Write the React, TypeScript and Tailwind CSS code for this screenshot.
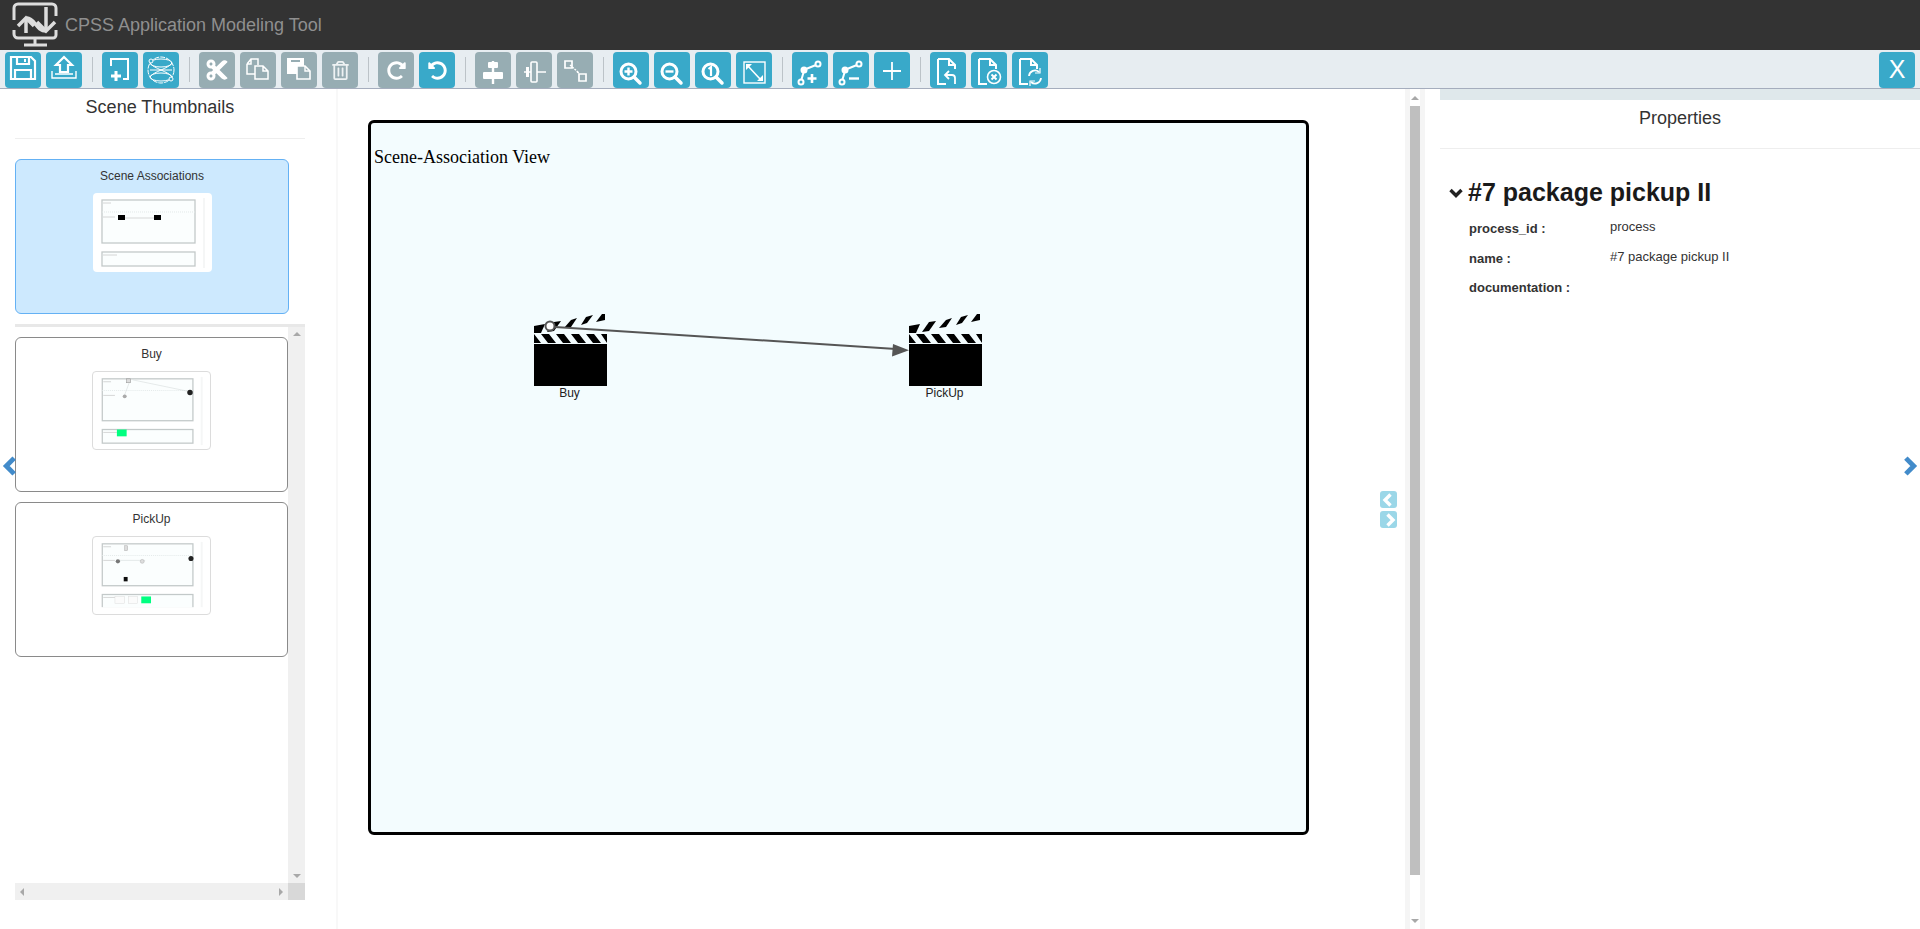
import type {ReactNode} from 'react';
import {FaCut, FaRedoAlt, FaRegTrashAlt, FaUndoAlt} from 'react-icons/fa';

const sansFont = 'font-["Liberation_Sans",Arial,sans-serif]';

function Ico({children}: {children: ReactNode}) {
  return (
    <svg viewBox="0 0 36 36" className="h-9 w-9" fill="none" stroke="white" strokeWidth="2">
      {children}
    </svg>
  );
}

function ToolButton({children, off}: {children: ReactNode; off?: boolean}) {
  return (
    <button
      className={`flex h-9 w-9 shrink-0 items-center justify-center rounded-[4px] text-white ${
        off ? 'bg-[#97adb3]' : 'bg-[#39a9c9]'
      }`}
    >
      {children}
    </button>
  );
}

function Sep() {
  return <div className="mx-[9.5px] mt-[5px] h-[25px] w-px shrink-0 bg-[#bcc3c8]" />;
}

function Magnifier({children}: {children?: ReactNode}) {
  return (
    <Ico>
      <circle cx="15.5" cy="19.5" r="7.5" strokeWidth="3" />
      <path d="M21 25l6 6" strokeWidth="3.5" strokeLinecap="round" />
      {children}
    </Ico>
  );
}

function PathIcon({children}: {children: ReactNode}) {
  return (
    <Ico>
      <circle cx="9" cy="30" r="2.5" />
      <circle cx="12" cy="18" r="2.5" fill="white" />
      <circle cx="26" cy="12" r="2.5" />
      <path d="M9.5 27.5l2-7M14 17l10-4" />
      {children}
    </Ico>
  );
}

function DocIcon({children}: {children: ReactNode}) {
  return (
    <Ico>
      <path d="M8 7h11l6 6v4M19 7v6h6M8 7v25h8" />
      {children}
    </Ico>
  );
}

function Toolbar() {
  return (
    <div className="flex h-[39px] shrink-0 items-start border-b border-[#a5adbd] bg-[#e7edf1] pl-[5px] pt-[2px] pr-[5px]">
      <div className="flex gap-[5px]">
        <ToolButton>
          <Ico>
            <path d="M6 5h20l4 4v18H6z" strokeWidth="2.2" />
            <path d="M12 5v7h12V5M10 27v-9h16v9" strokeWidth="2.2" />
            <path d="M20 7v3" />
          </Ico>
        </ToolButton>
        <ToolButton>
          <Ico>
            <path d="M6 19v7h24v-7M9 22h18" strokeWidth="1.4" />
            <path d="M18 5l-8 8h4v7h8v-7h4z" strokeWidth="2.2" />
          </Ico>
        </ToolButton>
      </div>
      <Sep />
      <div className="flex gap-[5px]">
        <ToolButton>
          <Ico>
            <path d="M9 14V7h17v20h-5" />
            <path d="M14 19v10M9 24h10" strokeWidth="3" />
          </Ico>
        </ToolButton>
        <ToolButton>
          <Ico>
            <g strokeWidth="1">
              <circle cx="18" cy="18" r="13" strokeDasharray="5 1" />
              <ellipse cx="18" cy="11" rx="11" ry="4" />
              <ellipse cx="18" cy="25" rx="11" ry="4" />
              <path d="M7 11c4 6 18 8 22 14M29 11c-4 6-18 8-22 14M7 18h22" />
              <circle cx="8" cy="9" r="2" fill="#39a9c9" />
              <circle cx="28" cy="27" r="2" fill="#39a9c9" />
            </g>
          </Ico>
        </ToolButton>
      </div>
      <Sep />
      <div className="flex gap-[5px]">
        <ToolButton off>
          <FaCut size={24} />
        </ToolButton>
        <ToolButton off>
          <Ico>
            <path d="M7 12l4-5h7v6M7 12v10h8M7 12h4V7" strokeWidth="1.5" />
            <path d="M15 14h8l5 5v8H15zM23 14v5h5" strokeWidth="1.5" />
          </Ico>
        </ToolButton>
        <ToolButton off>
          <Ico>
            <rect x="6" y="6" width="17" height="16" fill="white" stroke="none" />
            <path d="M10 9h9" stroke="#97adb3" strokeWidth="2" />
            <path d="M16 14h8l5 5v8H16z" fill="#97adb3" strokeWidth="1.6" />
            <path d="M24 14v5h5" strokeWidth="1.4" />
          </Ico>
        </ToolButton>
        <ToolButton off>
          <FaRegTrashAlt size={19} className="text-[#eef2f3]" />
        </ToolButton>
      </div>
      <Sep />
      <div className="flex gap-[5px]">
        <ToolButton off>
          <FaRedoAlt size={19} />
        </ToolButton>
        <ToolButton>
          <FaUndoAlt size={19} />
        </ToolButton>
      </div>
      <Sep />
      <div className="flex gap-[5px]">
        <ToolButton off>
          <Ico>
            <path d="M18 9v23" strokeWidth="2.4" />
            <rect x="13" y="10" width="10" height="6" rx="1" fill="white" stroke="none" />
            <rect x="8" y="20" width="20" height="7" rx="1" fill="white" stroke="none" />
          </Ico>
        </ToolButton>
        <ToolButton off>
          <Ico>
            <path d="M8 20h22" strokeWidth="1.5" />
            <rect x="15" y="10" width="6" height="20" rx="1" fill="#97adb3" strokeWidth="1.6" />
            <rect x="10" y="15" width="3" height="10" fill="white" stroke="none" />
          </Ico>
        </ToolButton>
        <ToolButton off>
          <Ico>
            <path d="M8 9h7v7H8zM22 22h7v7h-7z" strokeWidth="1.7" />
            <path d="M13 13l9 8M20 20l2 1" strokeWidth="1.4" strokeDasharray="2 1" />
          </Ico>
        </ToolButton>
      </div>
      <Sep />
      <div className="flex gap-[5px]">
        <ToolButton>
          <Magnifier>
            <path d="M11.5 19.5h8M15.5 15.5v8" strokeWidth="2.4" />
          </Magnifier>
        </ToolButton>
        <ToolButton>
          <Magnifier>
            <path d="M11.5 19.5h8" strokeWidth="2.4" />
          </Magnifier>
        </ToolButton>
        <ToolButton>
          <Magnifier>
            <path d="M13.5 17l2.5-2v9" strokeWidth="2.2" />
          </Magnifier>
        </ToolButton>
        <ToolButton>
          <Ico>
            <rect x="8" y="10" width="21" height="21" strokeWidth="1.4" />
            <path d="M11 13l14 15" strokeWidth="1.6" />
            <path d="M10 12h6l-6 6zM27 29h-6l6-6z" fill="white" stroke="none" />
          </Ico>
        </ToolButton>
      </div>
      <Sep />
      <div className="flex gap-[5px]">
        <ToolButton>
          <PathIcon>
            <path d="M20 22v9M15.5 26.5h9" strokeWidth="2.6" />
          </PathIcon>
        </ToolButton>
        <ToolButton>
          <PathIcon>
            <path d="M16 26.5h10" strokeWidth="2.4" />
          </PathIcon>
        </ToolButton>
        <ToolButton>
          <Ico>
            <path d="M18 10v18M9 19h18" strokeWidth="1.8" />
          </Ico>
        </ToolButton>
      </div>
      <Sep />
      <div className="flex gap-[5px]">
        <ToolButton>
          <DocIcon>
            <path d="M25 32v-6a3 3 0 0 0-3-3h-6M19 19l-4 4 4 4" strokeWidth="1.8" />
          </DocIcon>
        </ToolButton>
        <ToolButton>
          <DocIcon>
            <circle cx="23" cy="25" r="6.5" strokeWidth="1.6" />
            <path d="M20.5 22.5l5 5M25.5 22.5l-5 5" />
          </DocIcon>
        </ToolButton>
        <ToolButton>
          <DocIcon>
            <path d="M17 24a6 6 0 0 1 10-4M29 26a6 6 0 0 1-10 4" strokeWidth="1.8" />
            <path d="M28 16v5h-5M18 34v-5h5" strokeWidth="1.2" />
          </DocIcon>
        </ToolButton>
      </div>
      <button
        className={`ml-auto flex h-9 w-9 items-center justify-center rounded-[4px] bg-[#39a9c9] text-[25px] text-white ${sansFont}`}
      >
        X
      </button>
    </div>
  );
}

function ThumbFrames() {
  return (
    <g fill="#fbfefe" stroke="#c3c9c9" strokeWidth="1.3">
      <rect x="9" y="7" width="93" height="43" />
      <path d="M9 19h93" stroke="#e3e9e9" strokeWidth="1" strokeDasharray="1 1" />
      <rect x="9" y="59" width="93" height="14" />
      <path d="M111 5v70" stroke="#f5f6f6" strokeWidth="2" />
      <path d="M10 10h8M10 24h12M10 62h14" stroke="#cccccc" strokeWidth="0.8" />
    </g>
  );
}

function SceneThumb({kind}: {kind: 'assoc' | 'buy' | 'pickup'}) {
  return (
    <svg
      viewBox="0 0 119 79"
      className={`mx-auto h-[79px] w-[119px] rounded-[4px] bg-white ${
        kind === 'assoc' ? '' : 'border border-[#dcdcdc]'
      }`}
    >
      <filter id={`soft-${kind}`} x="-5%" y="-5%" width="110%" height="110%">
        <feGaussianBlur stdDeviation="0.45" />
      </filter>
      <g filter={`url(#soft-${kind})`}>
        <ThumbFrames />
        {kind === 'assoc' && (
          <g>
            <path d="M32 25h36" stroke="#c8c8c8" strokeWidth="0.7" />
            <rect x="25" y="22" width="7" height="5" fill="#000" />
            <rect x="61" y="22" width="7" height="5" fill="#000" />
          </g>
        )}
        {kind === 'buy' && (
          <g>
            <path d="M37 10l-6 16M40 8l58 12" stroke="#d5dada" strokeWidth="0.6" />
            <rect x="34" y="7" width="4" height="4" fill="#ddd" stroke="#999" strokeWidth="0.6" />
            <circle cx="32" cy="25" r="2" fill="#aaa" />
            <circle cx="99" cy="21" r="2.8" fill="#222" />
            <rect x="24" y="59" width="10" height="7" fill="#00ff80" />
          </g>
        )}
        {kind === 'pickup' && (
          <g>
            <path d="M25 24h28" stroke="#d5dada" strokeWidth="0.6" />
            <rect x="32" y="9" width="3" height="5" fill="#ddd" stroke="#aaa" strokeWidth="0.5" />
            <circle cx="25" cy="25" r="2.2" fill="#777" />
            <circle cx="50" cy="25" r="2" fill="#ddd" stroke="#aaa" strokeWidth="0.5" />
            <circle cx="100" cy="22" r="2.6" fill="#222" />
            <rect x="31" y="41" width="4" height="4.5" fill="#111" />
            <rect x="22" y="61" width="10" height="7" fill="#fbfbfb" stroke="#ddd" strokeWidth="0.5" />
            <rect x="36" y="61" width="9" height="7" fill="#fbfbfb" stroke="#ddd" strokeWidth="0.5" />
            <rect x="49" y="61" width="10" height="7" fill="#00ff80" />
            <rect x="5" y="72" width="108" height="7" fill="#fff" />
          </g>
        )}
      </g>
    </svg>
  );
}

function SceneCard({title, kind, active}: {title: string; kind: 'assoc' | 'buy' | 'pickup'; active?: boolean}) {
  return (
    <div
      className={`h-[155px] rounded-[6px] border pt-[8px] ${
        active ? 'w-[274px] border-[#64b1f4] bg-[#cde9fe]' : 'w-[273px] border-[#8a8a8a] bg-white'
      }`}
    >
      <div className="mb-[9px] h-[16px] text-center text-[12px] leading-[16px] text-[#333]">{title}</div>
      <SceneThumb kind={kind} />
    </div>
  );
}

function Arrow({d}: {d: string}) {
  return (
    <svg viewBox="0 0 10 10" className="h-[10px] w-[10px]" fill="#a8a8a8">
      <path d={d} />
    </svg>
  );
}

function LeftPanel() {
  return (
    <div className="flex w-[336px] shrink-0 flex-col px-[15px]">
      <div className="h-[49px] w-[290px] pt-[7px] text-center text-[18px] leading-[22px] text-[#333]">
        Scene Thumbnails
      </div>
      <div className="h-px w-[290px] bg-[#eeeeee]" />
      <div className="mt-[20px]">
        <SceneCard title="Scene Associations" kind="assoc" active />
      </div>
      <div className="mt-[10px] h-[3px] w-[290px] bg-[#e8e8e8]" />
      <div className="flex h-[556px] w-[290px]">
        <div className="flex w-[273px] flex-col gap-[10px] pt-[10px]">
          <SceneCard title="Buy" kind="buy" />
          <SceneCard title="PickUp" kind="pickup" />
        </div>
        <div className="flex w-[17px] flex-col items-center justify-between bg-[#f0f0f0] py-[2px]">
          <Arrow d="M1 7l4-4 4 4z" />
          <Arrow d="M1 3l4 4 4-4z" />
        </div>
      </div>
      <div className="flex h-[17px] w-[290px]">
        <div className="flex w-[273px] items-center justify-between bg-[#f0f0f0] px-[2px]">
          <Arrow d="M7 1L3 5l4 4z" />
          <Arrow d="M3 1l4 4-4 4z" />
        </div>
        <div className="w-[17px] bg-[#d8d8d8]" />
      </div>
    </div>
  );
}

function Clapper({x, y, label}: {x: number; y: number; label: string}) {
  return (
    <div className="absolute w-[74px] text-center" style={{left: x, top: y}}>
      <svg viewBox="0 0 74 72" className="block h-[72px] w-[74px]">
        <path d="M0 12l11-2-4 9H0z" />
        <path d="M13 18l7-10 7-1-7 10z" />
        <path d="M30 14l7-8 6-2-6 9z" />
        <path d="M47 11l5-8 7-2-6 8z" />
        <path d="M62 8l6-8h3v6z" />
        <rect x="0" y="20" width="73" height="9" />
        <path d="M0 20l7 9h7l-7-9zM15 20l7 9h7l-7-9zM30 20l7 9h7l-7-9zM45 20l7 9h7l-7-9zM60 20l7 9h6l-6-9z" fill="#f3fcfe" />
        <rect x="0" y="30" width="73" height="42" />
      </svg>
      <div className={`mt-[1px] pr-[3px] text-[12px] leading-[13px] text-[#222] ${sansFont}`}>{label}</div>
    </div>
  );
}

function Canvas() {
  return (
    <div className="relative h-[715px] w-[941px] rounded-[6px] border-[3px] border-black bg-[#f3fcfe]">
      <div className='absolute left-[3px] top-[23px] font-["Liberation_Serif",serif] text-[18px] leading-[22px] text-black'>
        Scene-Association View
      </div>
      <Clapper x={163} y={191} label="Buy" />
      <Clapper x={538} y={191} label="PickUp" />
      <svg className="absolute left-0 top-0 h-full w-full" fill="none">
        <path d="M184 204L525 226" stroke="#555" strokeWidth="2" />
        <path d="M538 227.3l-16-6.3-1 12.6z" fill="#555" />
        <circle cx="179" cy="203" r="4.5" fill="#fff" stroke="#555" strokeWidth="2" />
      </svg>
    </div>
  );
}

function CenterPanel() {
  return (
    <div className="relative flex min-w-0 flex-1 border-l-2 border-[#f8f8f8]">
      <div className="flex-1 pl-[30px] pt-[31px]">
        <Canvas />
      </div>
      <div className="mr-[15px] flex h-full w-[20px] flex-col items-center border-x-[5px] border-x-[#f5f5f5] bg-white">
        <div className="flex h-[17px] w-full items-center justify-center">
          <Arrow d="M1 7l4-4 4 4z" />
        </div>
        <div className="h-[769px] w-full bg-[#bfbfbf]" />
        <div className="mt-auto flex h-[17px] w-full items-center justify-center">
          <Arrow d="M1 3l4 4 4-4z" />
        </div>
      </div>
      <div className="absolute left-[1042px] top-[402px] flex flex-col gap-[3px]">
        <div className="flex h-[17px] w-[17px] items-center justify-center rounded-[3px] bg-[#9bd7e8]">
          <Chevron dir="left" size={14} color="#fff" />
        </div>
        <div className="flex h-[17px] w-[17px] items-center justify-center rounded-[3px] bg-[#9bd7e8]">
          <Chevron dir="right" size={14} color="#fff" />
        </div>
      </div>
    </div>
  );
}

function Chevron({dir, size, color}: {dir: 'left' | 'right' | 'down'; size: number; color: string}) {
  const d = dir === 'left' ? 'M8.5 1.5L3 7l5.5 5.5' : dir === 'right' ? 'M5.5 1.5L11 7l-5.5 5.5' : 'M1.5 5L7 10.5 12.5 5';
  return (
    <svg viewBox="0 0 14 14" width={size} height={size} fill="none" stroke={color} strokeWidth="3.4">
      <path d={d} />
    </svg>
  );
}

function PropRow({label, value}: {label: string; value?: string}) {
  return (
    <div className="flex h-[29.5px]">
      <div className="w-[141px] pt-[2px] text-[13px] font-bold leading-[18px] text-[#333]">{label}</div>
      <div className="pt-[1px] text-[13px] leading-[16px] text-[#333]">{value}</div>
    </div>
  );
}

function RightPanel() {
  return (
    <div className="flex w-[480px] shrink-0 flex-col">
      <div className="h-[11px] bg-[#dfe8eb]" />
      <div className="h-[48px] pt-[7px] text-center text-[18px] leading-[22px] text-[#333]">Properties</div>
      <div className="h-px bg-[#eeeeee]" />
      <div className="flex items-center pl-[9px] pt-[27px]">
        <Chevron dir="down" size={14} color="#222" />
        <span className="ml-[5px] text-[25px] font-bold leading-[32px] text-[#1a1a1a]">#7 package pickup II</span>
      </div>
      <div className="pl-[29px] pt-[10px]">
        <PropRow label="process_id :" value="process" />
        <PropRow label="name :" value="#7 package pickup II" />
        <PropRow label="documentation :" />
      </div>
    </div>
  );
}

export default function App() {
  return (
    <div className={`relative flex h-[929px] w-full flex-col overflow-hidden bg-white ${sansFont}`}>
      <div className="flex h-[50px] shrink-0 items-center bg-[#333333]">
        <svg viewBox="0 0 60 50" className="ml-[5px] h-[50px] w-[60px]" fill="none" stroke="#dddddd" strokeWidth="3">
          <path d="M9 20V8a4 4 0 0 1 4-4h34a4 4 0 0 1 4 4v8M51 30v5a3 3 0 0 1-3 3H13a4 4 0 0 1-4-4v-4" />
          <path d="M21 33V18" strokeWidth="3.5" />
          <path d="M13 26l8-8 8 8" strokeWidth="3.5" />
          <path d="M22 18c8 0 9 13 19 13" strokeWidth="3.5" />
          <path d="M41 7v23" strokeWidth="3.5" />
          <path d="M32 22l9 9 9-9" strokeWidth="3.5" />
          <path d="M30 38v6M19 45h23" strokeWidth="3" />
        </svg>
        <span className="text-[18px] text-[#8f8f8f]">CPSS Application Modeling Tool</span>
      </div>
      <Toolbar />
      <div className="flex min-h-0 flex-1">
        <LeftPanel />
        <CenterPanel />
        <RightPanel />
      </div>
      <div className="absolute left-[2px] top-[456px]">
        <Chevron dir="left" size={20} color="#428bca" />
      </div>
      <div className="absolute right-[2px] top-[456px]">
        <Chevron dir="right" size={20} color="#428bca" />
      </div>
    </div>
  );
}
